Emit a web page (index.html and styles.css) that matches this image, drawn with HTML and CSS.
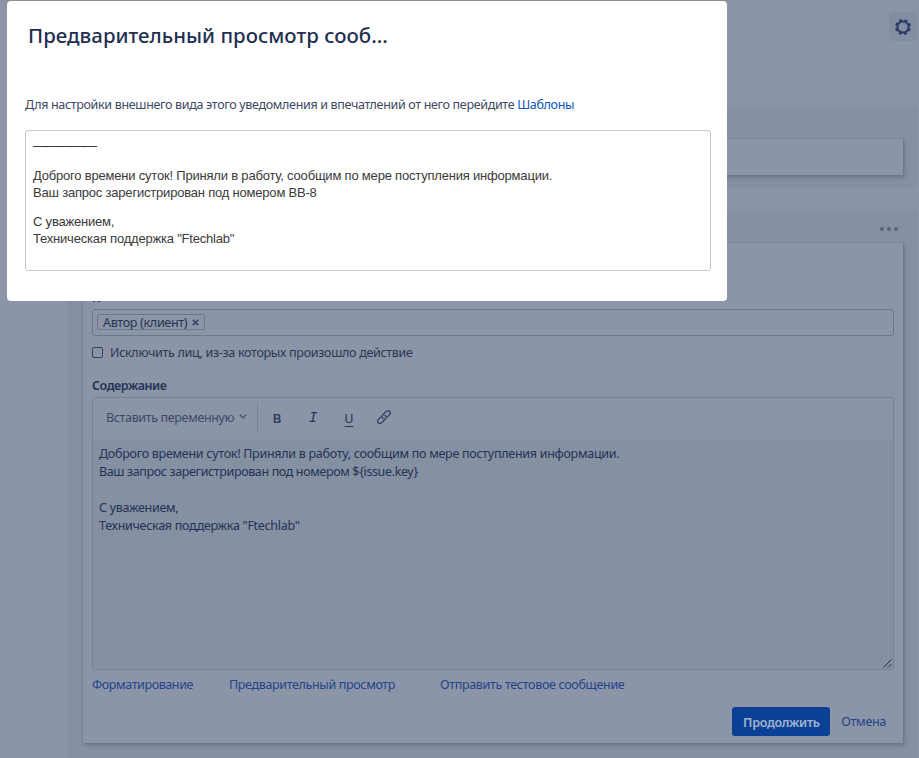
FILE: index.html
```
<!DOCTYPE html>
<html lang="ru">
<head>
<meta charset="utf-8">
<title>Предварительный просмотр</title>
<link rel="stylesheet" href="styles.css">
</head>
<body>
<main class="page">
  <header class="page-head">
    <button class="gear" aria-label="Настройки">
      <svg width="18" height="18" viewBox="0 0 18 18"><circle cx="9" cy="9" r="5.6" fill="none" stroke="#293d66" stroke-width="2"/><circle cx="9" cy="9" r="7" fill="none" stroke="#293d66" stroke-width="2" stroke-dasharray="2.9 2.6" stroke-dashoffset="-1.3"/></svg>
    </button>
  </header>
  <section class="panel panel-small"><div class="card"></div></section>
  <section class="panel panel-main">
    <div class="more"><i></i><i></i><i></i></div>
    <div class="card form">
      <div class="label to">К</div>
      <div class="recipients"><span class="tag"><span class="t-tag">Автор (клиент)</span><svg width="7" height="7" viewBox="0 0 7 7"><path d="M.8.8l5.4 5.4M6.2.8L.8 6.2" stroke="#3d4963" stroke-width="1.8"/></svg></span></div>
      <div class="check"><span class="box"></span><span class="t-check">Исключить лиц, из-за которых произошло действие</span></div>
      <div class="label content"><span class="t-content">Содержание</span></div>
      <div class="editor">
        <div class="toolbar">
          <span class="variable"><span class="t-var">Вставить переменную</span></span>
          <svg class="chev" width="8" height="5" viewBox="0 0 8 5"><path d="M.8.6L4 3.8 7.2.6" fill="none" stroke="#3b4864" stroke-width="1.2"/></svg>
          <span class="divider"></span>
          <span class="tool bold">B</span>
          <span class="tool italic">I</span>
          <span class="tool under">U</span>
          <svg class="link-icon" width="16" height="16" viewBox="0 0 16 16"><g fill="none" stroke="#2f3e60" stroke-width="1.3" stroke-linecap="round"><path d="M7 9.6C5.6 8.5 5.700 7 6.700 6l3.600-3.600c1-1 2.500-1 3.400-.1s.9 2.300-.1 3.300L11.300 7.900"/><path d="M9 6.400c1.400 1.100 1.300 2.600.3 3.600l-3.600 3.600c-1 1-2.500 1-3.400.1s-.9-2.300.1-3.300L4.700 8.100"/></g></svg>
        </div>
        <div class="area">
          <div><span class="t-a1">Доброго времени суток! Приняли в работу, сообщим по мере поступления информации.</span></div>
          <div><span class="t-a2">Ваш запрос зарегистрирован под номером ${issue.key}</span></div>
          <div>&nbsp;</div>
          <div><span class="t-a3">С уважением,</span></div>
          <div><span class="t-a4">Техническая поддержка "Ftechlab"</span></div>
          <svg class="grip" width="9" height="9" viewBox="0 0 9 9"><path d="M.5 8.500l8-8M5 8.500L8.500 5" stroke="#26314a" stroke-width="1"/></svg>
        </div>
      </div>
      <nav class="links">
        <a class="l1">Форматирование</a><a class="l2">Предварительный просмотр</a><a class="l3">Отправить тестовое сообщение</a>
      </nav>
      <div class="actions"><button class="primary"><span class="t-go">Продолжить</span></button><a class="t-cancel">Отмена</a></div>
    </div>
  </section>
</main>
<div class="dialog" role="dialog">
  <h2><span class="t-title">Предварительный просмотр сооб...</span></h2>
  <p class="hint"><span class="t-hint">Для настройки внешнего вида этого уведомления и впечатлений от него перейдите <a>Шаблоны</a></span></p>
  <div class="preview">
    <div class="rule">—-—-—-—-—</div>
    <p><span class="t-p1">Доброго времени суток! Приняли в работу, сообщим по мере поступления информации.</span><br><span class="t-p2">Ваш запрос зарегистрирован под номером BB-8</span></p>
    <p><span class="t-p3">С уважением,</span><br><span class="t-p4">Техническая поддержка "Ftechlab"</span></p>
  </div>
</div>
</body>
</html>
```
FILE: styles.css
```
* { box-sizing: border-box; }
body {
  margin: 0;
  width: 919px;
  height: 758px;
  overflow: hidden;
  position: relative;
  background: #8b95a7;
  color: #243356;
  font: 12.5px/18px "Noto Sans", "Open Sans", sans-serif;
  white-space: nowrap;
}
p, h2 { margin: 0; }
.page { height: 758px; padding-top: 1px; display: flex; flex-direction: column; }
.page-head { height: 106px; flex: none; display: flex; justify-content: flex-end; padding: 11px 2px 0 0; }
.gear { width: 28px; height: 29px; padding: 0; border: 0; border-radius: 3px; background: #848ea2; display: flex; align-items: center; justify-content: center; }
.panel { margin-left: 68px; width: 850px; flex: none; background: #8590a2; padding: 0 15px; }
.panel-small { height: 81px; padding-top: 32px; margin-bottom: 23px; }
.card { background: #8b95a7; box-shadow: 1px 2px 4px #65708a, 0 0 1px #5e6983; }
.panel-small .card { height: 36px; }
.panel-main { height: 547px; }
.more { height: 32px; display: flex; justify-content: flex-end; align-items: center; gap: 3px; padding: 4px 5px 0 0; }
.more i { width: 4px; height: 4px; border-radius: 50%; background: #58637b; }
.form { height: 500px; padding: 48px 9px 0; display: flex; flex-direction: column; }
.label { font-weight: 600; font-size: 12.5px; }
.to { height: 18px; line-height: 14px; }
.recipients { height: 27px; border: 1px solid #6d788f; border-radius: 3px; padding: 4px; display: flex; }
.tag { height: 16px; border: 1px solid #6d788f; border-radius: 2px; width: 108px; padding: 1px 5px 0; display: flex; align-items: center; justify-content: space-between; line-height: 16px; color: #27344f; }
.check { display: flex; align-items: center; height: 18px; margin-top: 7px; gap: 7px; color: #2b3853; }
.t-check { padding-top: 2px; }
.box { width: 11px; height: 11px; border: 1px solid #35415a; border-radius: 2px; }
.content { margin-top: 16px; height: 20px; }
.editor { height: 273px; border: 1px solid #778299; border-radius: 3px; }
.toolbar { height: 42px; display: flex; align-items: center; padding: 0 0 3px 13px; color: #3a4867; }
.variable { width: 128px; flex: none; }
.chev { margin: -3px 10px 0 5px; flex: none; }
.divider { width: 1px; height: 31px; background: #78839a; margin-top: -1px; }
.tool { width: 36px; text-align: center; font: 13.5px/18px Roboto, sans-serif; color: #2b3a5c; }
.bold { font-weight: 500; margin-left: 1px; }
.italic { font-family: "Liberation Mono", monospace; font-style: italic; font-size: 14.5px; }
.under { text-decoration: underline; text-underline-offset: 3px; }
.link-icon { margin-left: 9px; margin-top: -1px; }
.area { height: 229px; background: #8590a2; padding: 5px 6px 0; position: relative; }
.grip { position: absolute; right: 1px; bottom: 1px; }
.links { display: flex; height: 34px; padding-top: 6px; color: #23448a; }
.l1 { width: 137px; letter-spacing: -.4px; }
.l2 { width: 211px; letter-spacing: -.35px; }
.l3 { letter-spacing: -.32px; }
.actions { display: flex; justify-content: flex-end; align-items: center; height: 29px; gap: 11px; padding-right: 8px; color: #23448a; margin-top: 3px; }
.primary { width: 98px; height: 29px; padding: 2px 0 0; border: 0; border-radius: 3px; background: #0b4195; color: #a2b3d0; font: 600 12.5px/18px "Noto Sans", sans-serif; letter-spacing: -.3px; }
.dialog { position: absolute; left: 7px; top: 1px; width: 720px; height: 300px; background: #fff; border-radius: 4px; padding: 0 16px 0 18px; box-shadow: 0 -1px #8f8e97; }
h2 { font-size: 20.4px; line-height: 28px; font-weight: 500; color: #1f2f50; padding: 20px 0 0 3px; }
.hint { margin-top: 47px; color: #3d4963; }
.hint a { color: #0b56c0; }
.preview { margin-top: 16px; height: 141px; border: 1px solid #c6c8cd; border-radius: 3px; padding: 7px; font: 13px/17px "Liberation Sans", Arial, sans-serif; color: #3a3a3a; }
.preview p { margin-bottom: 12px; letter-spacing: -.2px; }
.rule { height: 29px; line-height: 15px; letter-spacing: -2.3px; }
.t-title { letter-spacing: .03px; }
.t-hint { letter-spacing: -.33px; }
.t-a1, .t-a3, .t-a4 { letter-spacing: -.28px; }
.t-a2 { letter-spacing: -.37px; }
.t-check { letter-spacing: -.3px; }
.t-tag { letter-spacing: -.3px; }
.t-content { letter-spacing: -.42px; }
.t-var { letter-spacing: -.35px; }
.t-cancel { letter-spacing: -.3px; }
```
